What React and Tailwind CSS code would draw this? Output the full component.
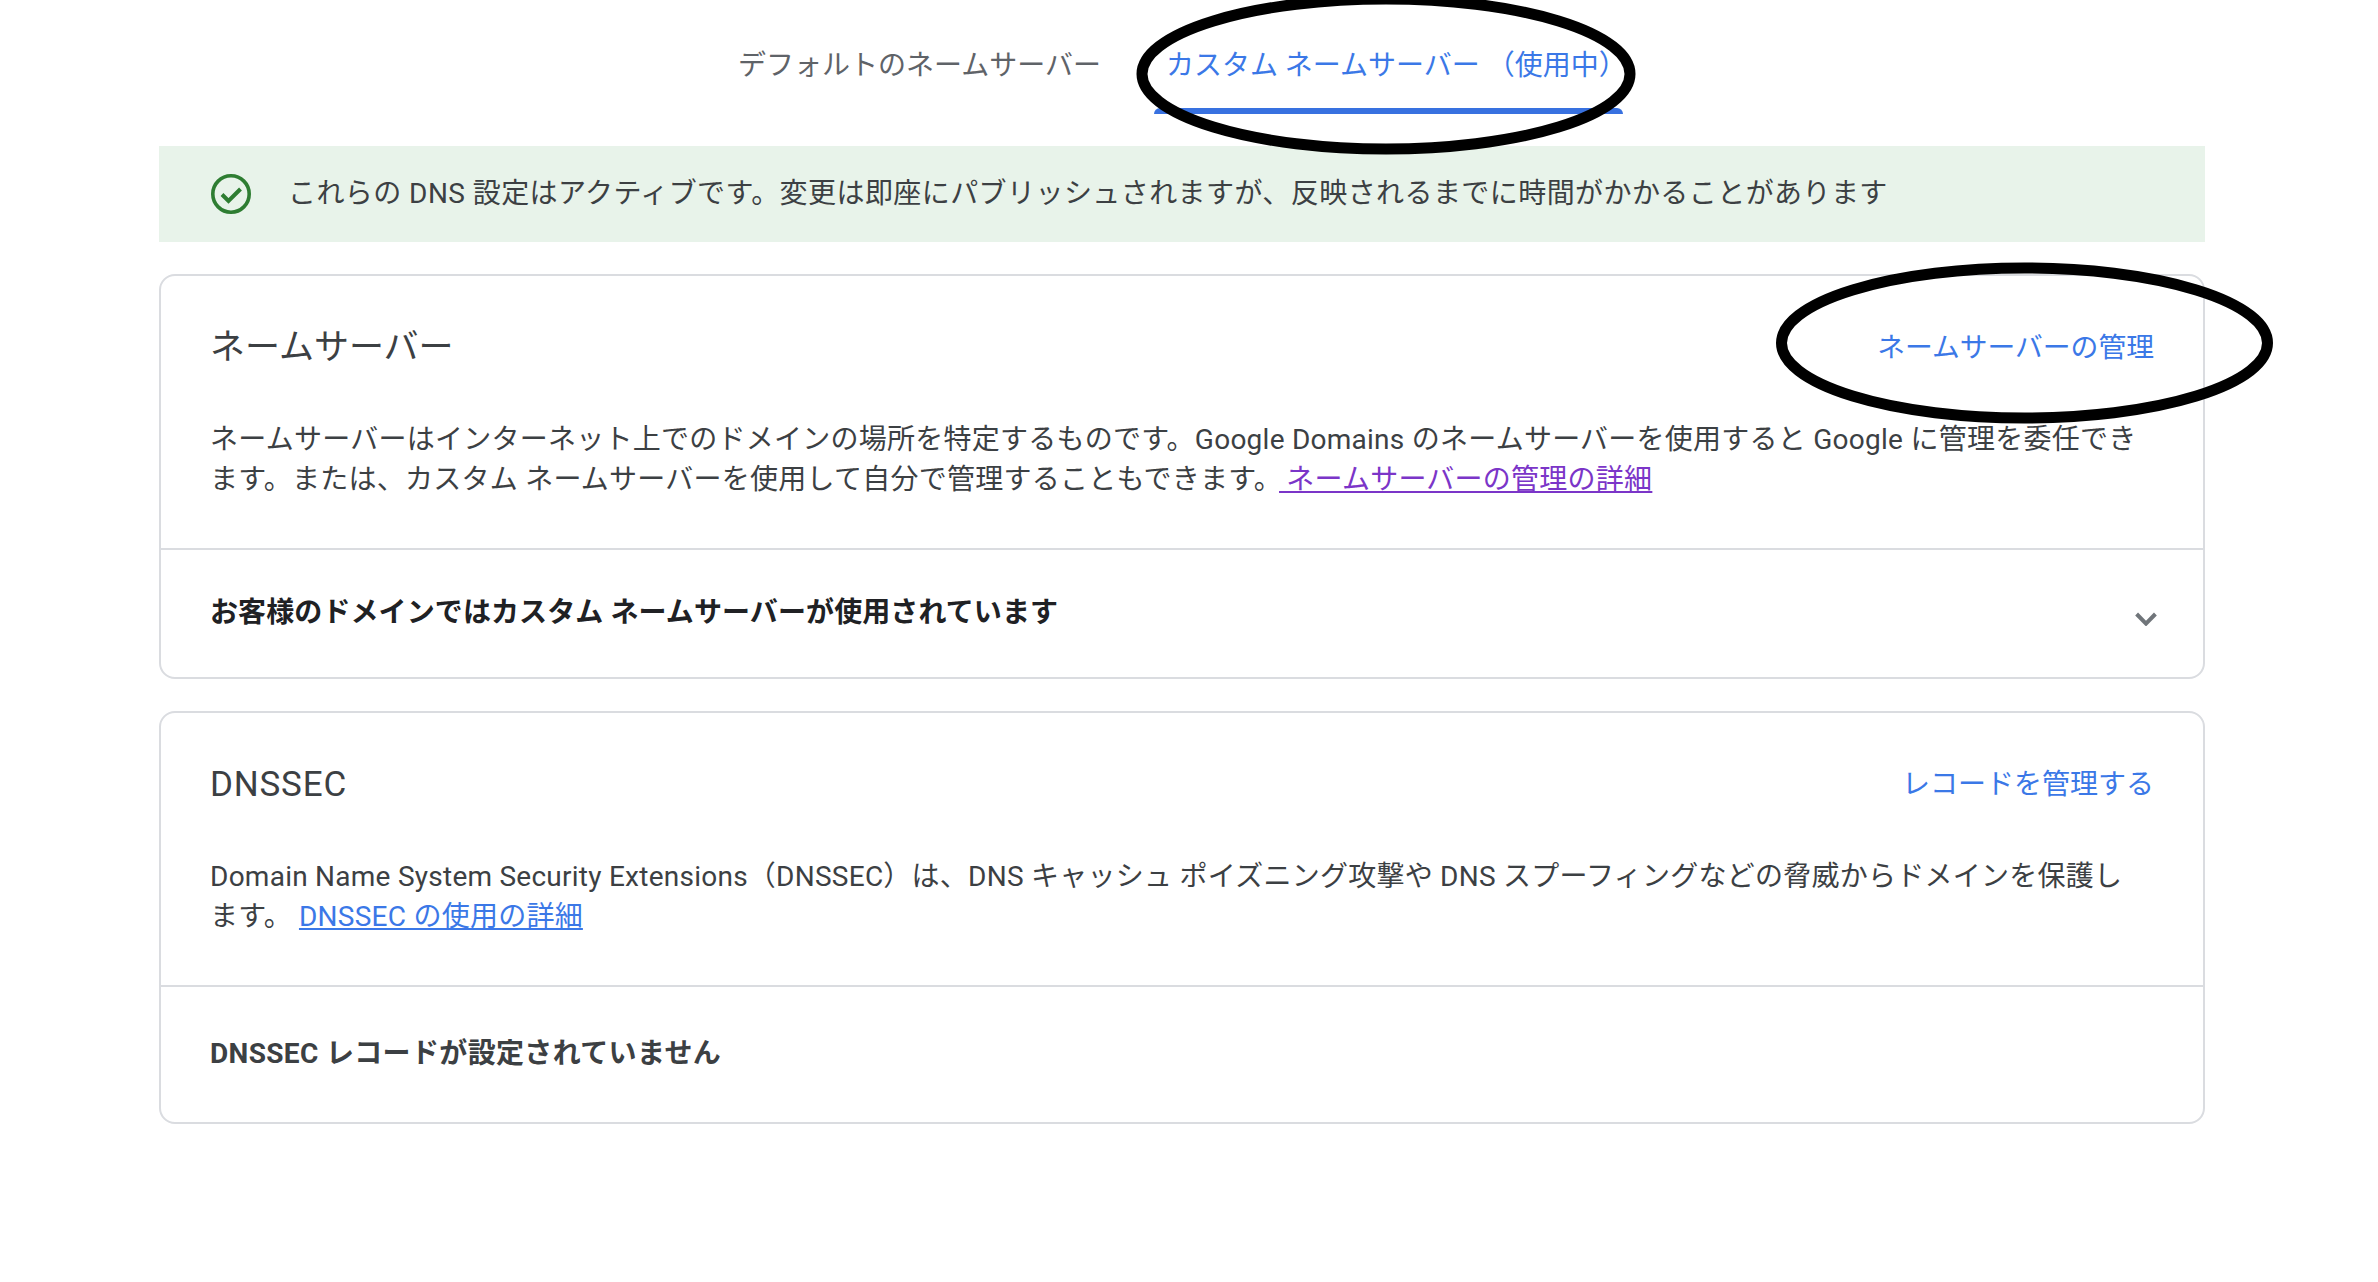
const fontStack = "font-['Roboto','Noto_Sans_CJK_JP',sans-serif]";

function CheckIcon() {
  return (
    <svg width="40" height="40" viewBox="0 0 40 40" fill="none" className="shrink-0">
      <circle cx="20" cy="20" r="18.2" stroke="#2e7d32" strokeWidth="3.6" />
      <path d="M11 20.5l6.5 6.5L29.5 15" stroke="#2e7d32" strokeWidth="4" />
    </svg>
  );
}

function Chevron() {
  return (
    <svg width="22" height="14" viewBox="0 0 22 14" fill="none" className="shrink-0 mt-[12px]">
      <path d="M1.6 2l9.4 9.6L20.4 2" stroke="#70757a" strokeWidth="4" />
    </svg>
  );
}

// 手書きの丸印
function Annotations() {
  return (
    <svg width="2378" height="1282" className="absolute left-0 top-0 pointer-events-none" fill="none">
      <ellipse cx="1386" cy="74" rx="244" ry="75" stroke="#000" strokeWidth="11" />
      <ellipse cx="2024.5" cy="343" rx="243" ry="75" stroke="#000" strokeWidth="11" />
    </svg>
  );
}

function Card({ title, titleClass, action, actionClass, rowClass, rowHeight, row, chevron, children }) {
  return (
    <div className="rounded-[16px] border-2 border-[#dadce0] bg-white">
      <div className="h-[274px] pl-[49px] pt-[49px] border-b-2 border-[#dadce0]">
        <div className="flex items-center justify-between h-[46px] pr-[49px]">
          <h2 className={`text-[35px] font-normal text-[#3c4043] ${titleClass}`}>{title}</h2>
          <a className={`text-[#3b78e7] ${actionClass}`}>{action}</a>
        </div>
        <p className="mt-[49px] pr-[58px] text-[28px] tracking-[0.25px] leading-[40px] text-[#3c4043]">{children}</p>
      </div>
      <div className={`flex items-center justify-between ${rowHeight} pl-[49px] pr-[46px] pb-[1px]`}>
        <span className={`text-[28px] font-bold ${rowClass}`}>{row}</span>
        {chevron && <Chevron />}
      </div>
    </div>
  );
}

export default function App() {
  return (
    <div className={`relative w-[2378px] h-[1282px] overflow-hidden bg-white ${fontStack}`}>
      <div className="ml-[159px] w-[2046px]">
        {/* タブ */}
        <div className="flex h-[146px] pl-[579px]">
          <div className="flex gap-[53px] h-[114px]">
            <div className="pt-[45px] text-[28px] text-[#5f6368]">デフォルトのネームサーバー</div>
            <div className="flex flex-col pt-[45px] text-[28px] text-[#3b78e7]">
              <span className="pl-[12px]">カスタム ネームサーバー （使用中）</span>
              <div className="mt-auto mr-[4px] h-[6px] rounded-t-[6px] bg-[#3871e0]"></div>
            </div>
          </div>
        </div>

        {/* ステータス */}
        <div className="flex items-center h-[96px] pl-[52px] gap-[37px] bg-[#e8f3ea] text-[28px] tracking-[0.43px] text-[#3c4043]">
          <CheckIcon />
          <span>これらの DNS 設定はアクティブです。変更は即座にパブリッシュされますが、反映されるまでに時間がかかることがあります</span>
        </div>

        <div className="mt-[32px] flex flex-col gap-[32px]">
          <Card
            title="ネームサーバー"
            titleClass="tracking-[0px]"
            action="ネームサーバーの管理"
            actionClass="text-[27.8px]"
            row="お客様のドメインではカスタム ネームサーバーが使用されています"
            rowClass="text-[#202124] tracking-[0.1px]"
            rowHeight="h-[127px]"
            chevron
          >
            ネームサーバーはインターネット上でのドメインの場所を特定するものです。Google Domains のネームサーバーを使用すると Google に管理を委任できます。または、カスタム ネームサーバーを使用して自分で管理することもできます。
            <a className="underline text-[#7b35c8] whitespace-pre -ml-[3px]"> ネームサーバーの管理の詳細</a>
          </Card>

          <Card
            title="DNSSEC"
            titleClass="tracking-[0.8px]"
            action="レコードを管理する"
            actionClass="text-[28px]"
            row="DNSSEC レコードが設定されていません"
            rowClass="text-[#3c4043] tracking-[0.35px]"
            rowHeight="h-[135px]"
          >
            Domain Name System Security Extensions（DNSSEC）は、DNS キャッシュ ポイズニング攻撃や DNS スプーフィングなどの脅威からドメインを保護します。
            <a className="underline text-[#3b78e7] ml-[7px]">DNSSEC の使用の詳細</a>
          </Card>
        </div>
      </div>
      <Annotations />
    </div>
  );
}
